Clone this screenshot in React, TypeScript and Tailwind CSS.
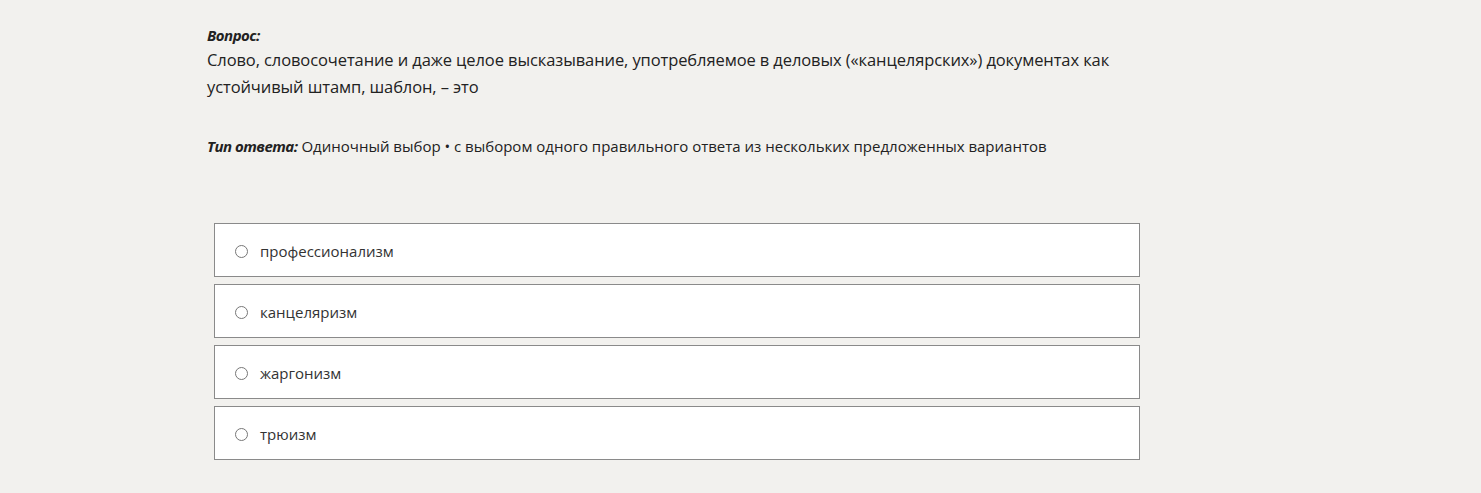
import React from "react";

const options = ["профессионализм", "канцеляризм", "жаргонизм", "трюизм"];

export default function App() {
  return (
    <div
      className="min-h-[493px] w-full bg-[#f2f1ee] text-[#222]"
      style={{ fontFamily: '"Open Sans", "Noto Sans", sans-serif' }}
    >
      <div className="pl-[207px] pt-[25px] w-[1160px]">
        <div className="text-[15px] font-bold italic leading-[20px] tracking-[-0.5px]">Вопрос:</div>
        <div className="text-[16.5px] leading-[27px] mt-[1px] w-[930px] tracking-[-0.1px]">
          Слово, словосочетание и даже целое высказывание, употребляемое в деловых («канцелярских») документах как устойчивый штамп, шаблон, – это
        </div>
        <div className="mt-[36px] text-[15px] leading-[21px]">
          <span className="font-bold italic tracking-[-0.5px]">Тип ответа:</span>{" "}
          <span>Одиночный выбор • с выбором одного правильного ответа из нескольких предложенных вариантов</span>
        </div>
      </div>
      <div className="pl-[214px] pt-[66px] flex flex-col gap-[7px] pb-[33px]">
        {options.map((o) => (
          <label
            key={o}
            className="w-[926px] h-[54px] bg-white border border-[#8a8a8a] flex items-center pl-[20px] pt-[2px] gap-[12px] text-[15px] text-[#333]"
          >
            <span className="w-[13px] h-[13px] rounded-full border border-[#777] bg-white" />
            <span>{o}</span>
          </label>
        ))}
      </div>
    </div>
  );
}
